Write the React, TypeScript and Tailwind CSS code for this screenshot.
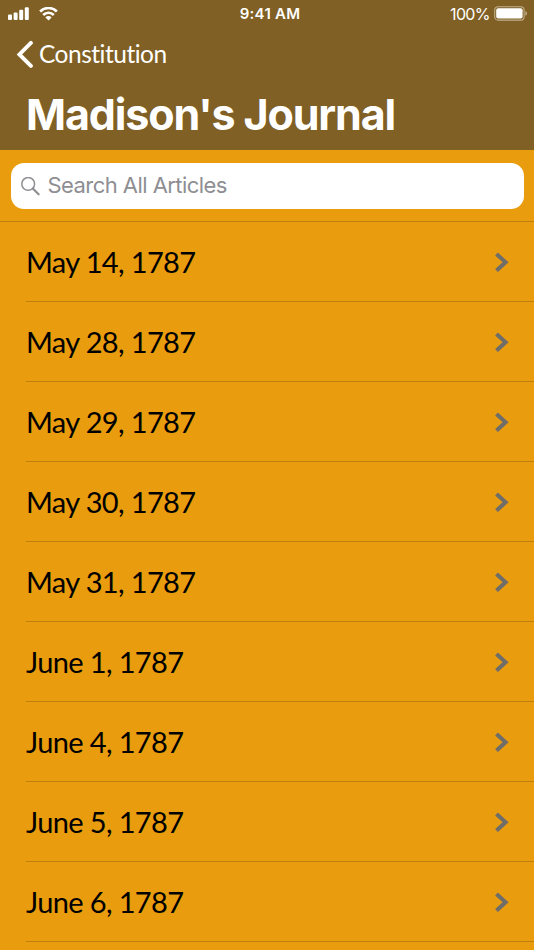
import React from 'react';

const entries = [
  'May 14, 1787',
  'May 28, 1787',
  'May 29, 1787',
  'May 30, 1787',
  'May 31, 1787',
  'June 1, 1787',
  'June 4, 1787',
  'June 5, 1787',
  'June 6, 1787',
];

export default function App() {
  return (
    <div className="w-[534px] h-[950px] overflow-hidden bg-[#e99c0d] flex flex-col">
      <header className="h-[150px] shrink-0 bg-[#806024] text-white">
        <StatusBar />
        <button className="flex items-center h-[54px] pl-4 gap-[5px]">
          <svg width="18" height="28" viewBox="0 0 18 28" fill="none" stroke="currentColor" strokeWidth="3.9" strokeLinecap="round" strokeLinejoin="miter">
            <path d="M14.9 2.9 3.4 14.4 14.9 25.9" />
          </svg>
          <span className="font-['Lato',sans-serif] text-[24.5px] leading-none tracking-[-0.5px]">Constitution</span>
        </button>
        <h1 className="pl-[26px] pt-[7px] font-['Inter',sans-serif] font-bold text-[43px] leading-[52px] tracking-[-1.12px] whitespace-nowrap">
          Madison's Journal
        </h1>
      </header>

      <SearchBar />

      <ul className="shrink-0">
        {entries.map((entry) => (
          <EntryRow key={entry} label={entry} />
        ))}
      </ul>
    </div>
  );
}

function StatusBar() {
  return (
    <div className="h-[27px] grid grid-cols-3 items-center pl-2 pr-[6px] font-['Inter',sans-serif]">
      <div className="flex items-center gap-[10px]">
        <svg width="21" height="14" viewBox="0 0 21 14" fill="currentColor">
          <rect x="0" y="7.4" width="4" height="5.6" rx="1" />
          <rect x="5.6" y="5.4" width="4" height="7.6" rx="1" />
          <rect x="11.2" y="2.8" width="4" height="10.2" rx="1" />
          <rect x="16.8" y="0.2" width="4" height="12.8" rx="1" />
        </svg>
        <svg width="19" height="14" viewBox="0 0 19 14" fill="none" stroke="currentColor" strokeWidth="2.6">
          <path d="M1.1 4.5a11.9 11.9 0 0 1 16.8 0" />
          <path d="M4.2 8a7.5 7.5 0 0 1 10.6 0" />
          <path d="M9.5 13.4 6.4 10.4a4.4 4.4 0 0 1 6.2 0Z" fill="currentColor" stroke="none" />
        </svg>
      </div>
      <span className="text-center text-[15px] leading-none font-semibold tracking-[0.25px] pl-1">9:41 AM</span>
      <div className="flex items-center justify-end gap-1">
        <span className="text-[16px] leading-none tracking-[-0.6px]">100%</span>
        <svg width="34" height="16" viewBox="0 0 34 16" fill="none">
          <rect x="0.7" y="0.7" width="29.4" height="13.4" rx="3.4" stroke="white" strokeOpacity="0.5" strokeWidth="1.1" />
          <rect x="2.2" y="2.2" width="26.4" height="10.4" rx="2" fill="white" />
          <path d="M31.4 5a2.6 2.6 0 0 1 0 4.8Z" fill="white" fillOpacity="0.5" />
        </svg>
      </div>
    </div>
  );
}

function SearchBar() {
  return (
    <div className="h-[72px] shrink-0 px-[10.5px] pt-[13px] border-b border-[#bf7f0c]">
      <div className="h-[46px] rounded-[13px] bg-white flex items-center pl-[10px] gap-[8px] text-[#8e8e93]">
        <svg width="19" height="19" viewBox="0 0 19 19" fill="none" stroke="currentColor">
          <circle cx="7.2" cy="6.9" r="6.4" strokeWidth="1.5" />
          <path d="m11.8 11.5 5.8 5.8" strokeWidth="2.2" strokeLinecap="round" />
        </svg>
        <span className="font-['Inter',sans-serif] text-[22px] leading-none tracking-[-0.55px] pb-[2px]">Search All Articles</span>
      </div>
    </div>
  );
}

function EntryRow({ label }: { label: string }) {
  return (
    <li className="ml-[26px] h-20 pr-[25px] flex items-center justify-between border-b border-[#bf7f0c]">
      <span className="font-['Lato',sans-serif] text-[29px] leading-none tracking-[-0.64px] text-black">{label}</span>
      <svg width="14" height="20" viewBox="0 0 14 20" fill="none" stroke="#6e6d69" strokeWidth="4">
        <path d="M1.5 2 10.6 10.3 1.5 18.6" />
      </svg>
    </li>
  );
}
